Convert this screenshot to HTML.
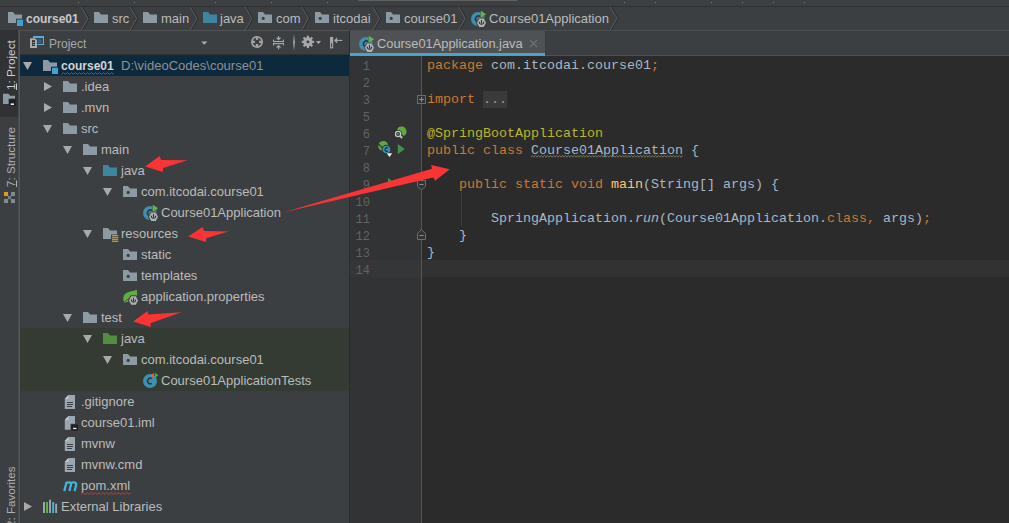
<!DOCTYPE html>
<html><head><meta charset="utf-8">
<style>
*{margin:0;padding:0;box-sizing:border-box}
html,body{width:1009px;height:523px;overflow:hidden}
body{background:#3C3F41;position:relative;font-family:"Liberation Sans",sans-serif;color:#BBBBBB}
.a{position:absolute}
.t{position:absolute;font-size:13px;line-height:21px;height:21px;white-space:pre;color:#BBBBBB}
.bc{position:absolute;top:8px;font-size:13px;line-height:21px;white-space:pre;color:#BBBBBB}
.code{position:absolute;left:427px;font-family:"Liberation Mono",monospace;font-size:13.333px;line-height:17px;height:17px;white-space:pre;color:#A9B7C6}
.ln{position:absolute;left:350px;width:20px;text-align:right;font-family:"Liberation Mono",monospace;font-size:12px;line-height:17px;height:17px;color:#606366}
.k{color:#CC7832}
svg{position:absolute;overflow:visible}
.fold{background:#3A3A3A;color:#9A9A9A;display:inline-block;height:17px;vertical-align:top}
.wavy{}
i{font-style:italic}
</style></head><body>

<!-- top strip + breadcrumb bar -->
<div class="a" style="left:0;top:0;width:1009px;height:6px;background:#3D4042"></div>
<div class="a" style="left:0;top:6px;width:1009px;height:1px;background:#2F3133"></div>
<div class="a" style="left:0;top:7px;width:1009px;height:23px;background:#3C3F41"></div>

<div class="a" style="left:358px;top:0;width:159px;height:1px;background:#5E6062"></div>
<div class="a" style="left:78px;top:2px;width:1px;height:1px;background:#7A7C7E"></div>
<div class="a" style="left:134px;top:2px;width:1px;height:1px;background:#7A7C7E"></div>
<div class="a" style="left:215px;top:2px;width:1px;height:1px;background:#7A7C7E"></div>
<div class="a" style="left:271px;top:2px;width:1px;height:1px;background:#7A7C7E"></div>
<div class="a" style="left:327px;top:2px;width:1px;height:1px;background:#7A7C7E"></div>
<div class="a" style="left:624px;top:2px;width:1px;height:1px;background:#7A7C7E"></div>
<div class="a" style="left:655px;top:2px;width:1px;height:1px;background:#7A7C7E"></div>
<div class="a" style="left:711px;top:2px;width:1px;height:1px;background:#7A7C7E"></div>
<div class="a" style="left:742px;top:2px;width:1px;height:1px;background:#7A7C7E"></div>
<div class="a" style="left:773px;top:2px;width:1px;height:1px;background:#7A7C7E"></div>
<div class="a" style="left:804px;top:2px;width:1px;height:1px;background:#7A7C7E"></div>
<!-- left tool strip -->
<div class="a" style="left:0;top:30px;width:19px;height:87px;background:#303234"></div>
<div class="a" style="left:18px;top:30px;width:1px;height:493px;background:#4A4B4C"></div>
<div class="a" style="left:19px;top:30px;width:1px;height:493px;background:#575757"></div>
<div class="a" style="left:20px;top:31px;width:1px;height:492px;background:#393C3E"></div>

<!-- project panel header -->
<div class="a" style="left:19px;top:30px;width:331px;height:1px;background:#515355"></div>
<div class="a" style="left:20px;top:54px;width:329px;height:1px;background:#2E3032"></div>

<!-- editor -->
<div class="a" style="left:349px;top:30px;width:1px;height:493px;background:#2B2B2B"></div>
<div class="a" style="left:350px;top:30px;width:659px;height:1px;background:#4B4E50"></div>
<div class="a" style="left:350px;top:55px;width:659px;height:1px;background:#4F5254"></div>
<div class="a" style="left:350px;top:31px;width:195px;height:22px;background:#4E5254"></div>
<div class="a" style="left:350px;top:53px;width:195px;height:3px;background:#4BA3C8"></div>
<div class="a" style="left:545px;top:31px;width:1px;height:24px;background:#36393B"></div>
<div class="a" style="left:350px;top:56px;width:659px;height:467px;background:#2B2B2B"></div>
<div class="a" style="left:350px;top:56px;width:71px;height:467px;background:#313335"></div>
<div class="a" style="left:421px;top:56px;width:1px;height:467px;background:#555555"></div>
<div class="a" style="left:350px;top:260px;width:71px;height:17px;background:#343638"></div>
<div class="a" style="left:422px;top:260px;width:587px;height:17px;background:#323232"></div>

<!-- tree selection & test bg -->
<div class="a" style="left:20px;top:55px;width:329px;height:21px;background:#0D293E"></div>
<div class="a" style="left:20px;top:328px;width:329px;height:63px;background:#333B33"></div>

<svg width="0" height="0" style="position:absolute">
<defs>
<symbol id="tdown" viewBox="0 0 9 8"><polygon points="0,0 9,0 4.5,8" fill="#A9A9A9"/></symbol>
<symbol id="tright" viewBox="0 0 8 9"><polygon points="0,0 8,4.5 0,9" fill="#A9A9A9"/></symbol>
<symbol id="i-folder" viewBox="0 0 16 16"><path d="M0 2H5L7 4.5H14V13H0Z" fill="#8C9AA3"/></symbol>
<symbol id="i-srcfolder" viewBox="0 0 16 16"><path d="M0 2H5L7 4.5H14V13H0Z" fill="#3E86A0"/></symbol>
<symbol id="i-testfolder" viewBox="0 0 16 16"><path d="M0 2H5L7 4.5H14V13H0Z" fill="#528E41"/></symbol>
<symbol id="i-pkg" viewBox="0 0 16 16"><path d="M0 2H5L7 4.5H14V13H0Z" fill="#8C9AA3"/><circle cx="5.2" cy="8.4" r="1.6" fill="#3C3F41"/></symbol>
<symbol id="i-mod" viewBox="0 0 16 16"><path d="M0 2H5L7 4.5H14V13H0Z" fill="#8C9AA3"/><rect x="8" y="8.7" width="8" height="8" fill="#0D293E"/><rect x="9" y="9.7" width="6" height="6.3" fill="#3FA2D3"/></symbol>
<symbol id="i-resfolder" viewBox="0 0 16 16"><path d="M0 2H5L7 4.5H14V13H0Z" fill="#8C9AA3"/><rect x="8" y="8.5" width="8" height="8" fill="#3C3F41"/><g fill="#E3A835"><rect x="9" y="9.2" width="6.3" height="1.1"/><rect x="9" y="11.2" width="6.3" height="1.1"/><rect x="9" y="13.2" width="6.3" height="1.1"/><rect x="9" y="15.2" width="6.3" height="1.1"/></g></symbol>
<symbol id="hexold" viewBox="0 0 9 9"><polygon points="2.2,0 6.8,0 9,4.5 6.8,9 2.2,9 0,4.5" fill="#AFB1B3"/><path d="M2.6 3.6A2 2 0 1 0 6.4 3.6" fill="none" stroke="#3C3F41" stroke-width="1.1"/><rect x="4" y="1.6" width="1" height="3.6" fill="#3C3F41"/></symbol>
<symbol id="i-sbclass" viewBox="0 0 16 16"><circle cx="7" cy="8" r="7" fill="#3F8FAE"/><path d="M9.3 5.6A3 3 0 1 0 9.3 10.4" fill="none" stroke="#2D3A40" stroke-width="1.6"/><polygon points="9.8,-0.2 15,3.2 9.8,6.8" fill="#62B543" stroke="currentColor" stroke-width="0.6"/><polygon points="9.8,-0.2 15,3.2 9.8,6.8" fill="#62B543"/><g transform="translate(6,7.6) scale(1,0.93)"><polygon points="2.2,0 6.8,0 9,4.5 6.8,9 2.2,9 0,4.5" fill="currentColor" stroke="currentColor" stroke-width="2" stroke-linejoin="round"/><polygon points="2.2,0 6.8,0 9,4.5 6.8,9 2.2,9 0,4.5" fill="#AFB1B3"/><path d="M2.5 3.4A2.1 2.1 0 1 0 6.5 3.4" fill="none" stroke="#2F3133" stroke-width="1.2"/><rect x="3.95" y="1.5" width="1.1" height="3.8" fill="#2F3133"/></g></symbol>
<symbol id="i-testclass" viewBox="0 0 16 16"><circle cx="7" cy="8" r="7" fill="#3F8FAE"/><path d="M8.8 5.6A2.8 2.8 0 1 0 8.8 10.4" fill="none" stroke="#283840" stroke-width="1.5"/><polygon points="11,-0.2 11,4.8 7.6,2.3" fill="#E9631F"/><polygon points="12,-0.2 15.3,2.3 12,4.8" fill="#55AE39"/></symbol>
<symbol id="i-leaf" viewBox="0 0 16 16"><path d="M13.6 0.8C14.9 5 14.2 9.6 10.2 11.6C7.3 13 4.2 12.6 1.6 13.9C-0.6 10.4 -0.2 6.6 3 4.3C6 2.1 11 2.6 13.6 0.8Z" fill="#5FAE40"/><path d="M1.2 13.6C3 11 6 9.5 9 8.6" stroke="#3C3F41" stroke-width="0.9" fill="none"/><g transform="translate(6,7.2) scale(1,0.96)"><polygon points="2.2,0 6.8,0 9,4.5 6.8,9 2.2,9 0,4.5" fill="currentColor" stroke="currentColor" stroke-width="2" stroke-linejoin="round"/><polygon points="2.2,0 6.8,0 9,4.5 6.8,9 2.2,9 0,4.5" fill="#AFB1B3"/><path d="M2.5 3.4A2.1 2.1 0 1 0 6.5 3.4" fill="none" stroke="#2F3133" stroke-width="1.2"/><rect x="3.95" y="1.5" width="1.1" height="3.8" fill="#2F3133"/></g></symbol>
<symbol id="i-file" viewBox="0 0 16 16"><path d="M5.5 1H12V15H1.8V4.8Z" fill="#9AA7B0"/><path d="M1.8 4.8H5.5V1Z" fill="#C4CBD0"/><g fill="#3C3F41"><rect x="4" y="8" width="6" height="1"/><rect x="4" y="10" width="6" height="1"/><rect x="4" y="12" width="5" height="1"/></g></symbol>
<symbol id="i-iml" viewBox="0 0 16 16"><path d="M5.5 1H12V14.8H1.8V4.8Z" fill="#9AA7B0"/><path d="M1.8 4.8H5.5V1Z" fill="#C4CBD0"/><rect x="7.5" y="8.8" width="8.5" height="7.6" fill="#3C3F41"/><rect x="8.3" y="9.6" width="6.7" height="6" fill="#231F20"/><rect x="10" y="12.8" width="3.5" height="1.3" fill="#E6E6E6"/></symbol>
<symbol id="i-maven" viewBox="0 0 16 16"><path transform="translate(0,0.9)" d="M1.2 12.2L3.4 3.9C5 3.3 7 3.3 8.1 4.2C9.5 3.3 11.8 3.2 12.8 4.2C13.4 4.8 13.3 5.6 13.1 6.4L11.6 12.2M8.1 4.2C8.2 4.8 8.1 5.4 7.9 6.1L6.4 12.2" fill="none" stroke="#40B6E0" stroke-width="2.2" stroke-linejoin="round"/></symbol>
<symbol id="i-libs" viewBox="0 0 16 16"><rect x="0" y="3" width="2" height="11" fill="#9AA7B0"/><rect x="3.1" y="3" width="1.9" height="11" fill="#62B543"/><rect x="6.1" y="0.7" width="1.9" height="13.3" fill="#9AA7B0"/><rect x="9.2" y="3" width="1.9" height="11" fill="#40B6E0"/><rect x="12.2" y="4.7" width="1.9" height="9.3" fill="#9AA7B0"/></symbol>
<symbol id="i-modbc" viewBox="0 0 16 17"><path d="M0 2H5L7 4.5H14V13H0Z" fill="#8C9AA3"/><rect x="8" y="8.7" width="8" height="8" fill="#3C3F41"/><rect x="9" y="9.7" width="6" height="6.3" fill="#3FA2D3"/></symbol>
<symbol id="i-sbclass-tab" viewBox="0 0 16 16"><circle cx="7" cy="8" r="7" fill="#3F8FAE"/><path d="M9.3 5.6A3 3 0 1 0 9.3 10.4" fill="none" stroke="#2D3A40" stroke-width="1.6"/><polygon points="9.8,-0.2 15,3.2 9.8,6.8" fill="#62B543" stroke="currentColor" stroke-width="0.6"/><polygon points="9.8,-0.2 15,3.2 9.8,6.8" fill="#62B543"/><g transform="translate(6,7.6) scale(1,0.93)"><polygon points="2.2,0 6.8,0 9,4.5 6.8,9 2.2,9 0,4.5" fill="currentColor" stroke="currentColor" stroke-width="2" stroke-linejoin="round"/><polygon points="2.2,0 6.8,0 9,4.5 6.8,9 2.2,9 0,4.5" fill="#AFB1B3"/><path d="M2.5 3.4A2.1 2.1 0 1 0 6.5 3.4" fill="none" stroke="#2F3133" stroke-width="1.2"/><rect x="3.95" y="1.5" width="1.1" height="3.8" fill="#2F3133"/></g></symbol>
<symbol id="i-proj" viewBox="0 0 17 14"><rect x="3.5" y="0.5" width="11" height="9" fill="#3C3F41"/><rect x="4" y="1" width="11" height="9" fill="#5EA9D8"/><rect x="5" y="3" width="9" height="6" fill="#2E4A5C"/><rect x="6.5" y="4.5" width="6" height="3.5" fill="#39627A"/><path d="M0 3H6L8.6 5.6V13.5H0Z" fill="#3C3F41"/><path d="M1 3.2H6L8 5.2V13H1Z" fill="#ADADAD"/><rect x="3" y="5.2" width="3" height="5.8" fill="#2F3133"/><rect x="3.7" y="7" width="1.8" height="0.9" fill="#ADADAD"/><rect x="3.7" y="9" width="1.8" height="0.9" fill="#ADADAD"/></symbol>
<symbol id="i-lproj" viewBox="0 0 15 14"><path d="M0 1.8H5.4L7.2 3.8H12V12H0Z" fill="#8C9AA3"/><rect x="5.6" y="6.6" width="7.9" height="7.9" fill="#303234"/><rect x="6.4" y="7.4" width="6.3" height="6.3" fill="#1E1E1E"/><rect x="7.7" y="11.4" width="3.3" height="1.6" fill="#F0F0F0"/></symbol>
<symbol id="i-struct" viewBox="0 0 15 14"><rect x="1" y="1" width="4" height="4" fill="#E09A27"/><g fill="#7F8B91"><rect x="8" y="1" width="4" height="4"/><rect x="1" y="8" width="4" height="4"/><rect x="8" y="8" width="4" height="4"/><path d="M5 5L8 8" stroke="#7F8B91" stroke-width="1.2"/><path d="M8 5L5 8" stroke="#7F8B91" stroke-width="1.2"/></g></symbol>
</defs></svg>

<!-- breadcrumb -->
<svg class="a" style="left:8px;top:10px" width="16" height="17"><use href="#i-modbc"/></svg>
<div class="bc" style="left:26px;top:9px;font-weight:bold;font-size:12px;color:#C8C8C8">course01</div>
<svg class="a" style="left:94px;top:10px" width="16" height="16"><use href="#i-folder"/></svg>
<div class="bc" style="left:112px">src</div>
<svg class="a" style="left:143px;top:10px" width="16" height="16"><use href="#i-folder"/></svg>
<div class="bc" style="left:161px">main</div>
<svg class="a" style="left:203px;top:10px" width="16" height="16"><use href="#i-srcfolder"/></svg>
<div class="bc" style="left:220px">java</div>
<svg class="a" style="left:258px;top:10px" width="16" height="16"><use href="#i-pkg"/></svg>
<div class="bc" style="left:276px">com</div>
<svg class="a" style="left:315px;top:10px" width="16" height="16"><use href="#i-pkg"/></svg>
<div class="bc" style="left:333px">itcodai</div>
<svg class="a" style="left:386px;top:10px" width="16" height="16"><use href="#i-pkg"/></svg>
<div class="bc" style="left:404px">course01</div>
<svg class="a" style="left:471px;top:11px" width="16" height="16" color="#3C3F41"><use href="#i-sbclass"/></svg>
<div class="bc" style="left:489px">Course01Application</div>

<!-- project header -->
<svg class="a" style="left:29px;top:35px" width="17" height="14"><use href="#i-proj"/></svg>
<div class="a" style="left:49px;top:34.5px;font-size:12px;line-height:18px;color:#A5A7A9;white-space:pre">Project</div>
<svg class="a" style="left:200px;top:36px" width="150" height="16">
<polygon points="1.2,5.5 7.4,5.5 4.3,8.8" fill="#A9A9A9"/>
<!-- crosshair -->
<circle cx="57" cy="5.9" r="5.2" fill="none" stroke="#A7A7A7" stroke-width="1.6"/>
<g fill="#A7A7A7"><rect x="55.8" y="1.2" width="2.4" height="2.6"/><rect x="55.8" y="8" width="2.4" height="2.6"/><rect x="52.3" y="4.7" width="2.6" height="2.4"/><rect x="59.1" y="4.7" width="2.6" height="2.4"/></g>
<!-- collapse -->
<g fill="#A7A7A7"><rect x="73" y="5" width="11" height="1.1"/><rect x="73" y="3.6" width="1.1" height="2.5"/><rect x="82.9" y="3.6" width="1.1" height="2.5"/>
<rect x="73" y="7.1" width="11" height="1.1"/><rect x="73" y="7.1" width="1.1" height="2.3"/><rect x="82.9" y="7.1" width="1.1" height="2.3"/>
<rect x="78" y="0" width="1.1" height="2.5"/><polygon points="75.8,1.8 81.3,1.8 78.55,4.4"/>
<polygon points="75.8,11.4 81.3,11.4 78.55,8.8"/><rect x="78" y="11" width="1.1" height="2.4"/></g>
</svg>
<div class="a" style="left:293px;top:34px;width:1.5px;height:17px;background:linear-gradient(#3C3F41,#9A9C9E 50%,#3C3F41)"></div>
<svg class="a" style="left:300px;top:34px" width="50" height="16">
<g transform="translate(7.9,7.9)" fill="#A7A7A7">
<circle r="4.6"/>
<g><rect x="-1.1" y="-6.2" width="2.2" height="12.4"/><rect x="-1.1" y="-6.2" width="2.2" height="12.4" transform="rotate(45)"/><rect x="-1.1" y="-6.2" width="2.2" height="12.4" transform="rotate(90)"/><rect x="-1.1" y="-6.2" width="2.2" height="12.4" transform="rotate(135)"/></g>
<circle r="1.4" fill="#3C3F41"/>
</g>
<polygon points="16,7 21,7 18.5,10.3" fill="#A7A7A7"/>
<rect x="30" y="3" width="3.2" height="11.4" fill="#A7A7A7"/>
<rect x="31.1" y="9.2" width="1" height="4" fill="#3C3F41"/>
<line x1="35" y1="6.4" x2="42.3" y2="6.4" stroke="#A7A7A7" stroke-width="1.1"/>
<polygon points="34,6.4 37.2,3.2 37.2,9.6" fill="#A7A7A7"/>
</svg>

<!-- left strip -->
<div class="a" style="left:-19.5px;top:54px;width:60px;height:12px;transform:rotate(-90deg);font-size:11.8px;line-height:12px;color:#D0D0D0;white-space:pre;text-align:left"><u>1</u>: Project</div>
<svg class="a" style="left:3px;top:92px" width="15" height="14"><use href="#i-lproj"/></svg>
<div class="a" style="left:-19.5px;top:151px;width:60px;height:12px;transform:rotate(-90deg);font-size:11.6px;line-height:12px;color:#AFB1B3;white-space:pre;text-align:right"><u>7</u>: Structure</div>
<svg class="a" style="left:3px;top:191px" width="15" height="14"><use href="#i-struct"/></svg>
<div class="a" style="left:-19.5px;top:491px;width:60px;height:12px;transform:rotate(-90deg);font-size:11.6px;line-height:12px;color:#AFB1B3;white-space:pre;text-align:right">2: Favorites</div>

<svg class="a" style="left:23px;top:62px" width="9" height="8"><use href="#tdown"/></svg>
<svg class="a" style="left:43px;top:58px" width="16" height="16"><use href="#i-mod"/></svg>
<div class="t" style="left:61px;top:56px;font-weight:bold;font-size:12px;color:#D4D4D4">course01</div>
<div class="t" style="left:121px;top:55px;color:#8F9193">D:\videoCodes\course01</div>
<svg class="a" style="left:44px;top:82px" width="8" height="9"><use href="#tright"/></svg>
<svg class="a" style="left:63px;top:79px" width="16" height="16"><use href="#i-folder"/></svg>
<div class="t" style="left:81px;top:76px">.idea</div>
<svg class="a" style="left:44px;top:103px" width="8" height="9"><use href="#tright"/></svg>
<svg class="a" style="left:63px;top:100px" width="16" height="16"><use href="#i-folder"/></svg>
<div class="t" style="left:81px;top:97px">.mvn</div>
<svg class="a" style="left:43px;top:125px" width="9" height="8"><use href="#tdown"/></svg>
<svg class="a" style="left:63px;top:121px" width="16" height="16"><use href="#i-folder"/></svg>
<div class="t" style="left:81px;top:118px">src</div>
<svg class="a" style="left:63px;top:146px" width="9" height="8"><use href="#tdown"/></svg>
<svg class="a" style="left:83px;top:142px" width="16" height="16"><use href="#i-folder"/></svg>
<div class="t" style="left:101px;top:139px">main</div>
<svg class="a" style="left:83px;top:167px" width="9" height="8"><use href="#tdown"/></svg>
<svg class="a" style="left:103px;top:163px" width="16" height="16"><use href="#i-srcfolder"/></svg>
<div class="t" style="left:121px;top:160px">java</div>
<svg class="a" style="left:103px;top:188px" width="9" height="8"><use href="#tdown"/></svg>
<svg class="a" style="left:123px;top:184px" width="16" height="16"><use href="#i-pkg"/></svg>
<div class="t" style="left:141px;top:181px">com.itcodai.course01</div>
<svg class="a" style="left:143px;top:205px" width="16" height="16" color="#3C3F41"><use href="#i-sbclass"/></svg>
<div class="t" style="left:161px;top:202px">Course01Application</div>
<svg class="a" style="left:83px;top:230px" width="9" height="8"><use href="#tdown"/></svg>
<svg class="a" style="left:103px;top:226px" width="16" height="16"><use href="#i-resfolder"/></svg>
<div class="t" style="left:121px;top:223px">resources</div>
<svg class="a" style="left:123px;top:247px" width="16" height="16"><use href="#i-pkg"/></svg>
<div class="t" style="left:141px;top:244px">static</div>
<svg class="a" style="left:123px;top:268px" width="16" height="16"><use href="#i-pkg"/></svg>
<div class="t" style="left:141px;top:265px">templates</div>
<svg class="a" style="left:123px;top:289px" width="16" height="16" color="#3C3F41"><use href="#i-leaf"/></svg>
<div class="t" style="left:141px;top:286px">application.properties</div>
<svg class="a" style="left:63px;top:314px" width="9" height="8"><use href="#tdown"/></svg>
<svg class="a" style="left:83px;top:310px" width="16" height="16"><use href="#i-folder"/></svg>
<div class="t" style="left:101px;top:307px">test</div>
<svg class="a" style="left:83px;top:335px" width="9" height="8"><use href="#tdown"/></svg>
<svg class="a" style="left:103px;top:331px" width="16" height="16"><use href="#i-testfolder"/></svg>
<div class="t" style="left:121px;top:328px">java</div>
<svg class="a" style="left:103px;top:356px" width="9" height="8"><use href="#tdown"/></svg>
<svg class="a" style="left:123px;top:352px" width="16" height="16"><use href="#i-pkg"/></svg>
<div class="t" style="left:141px;top:349px">com.itcodai.course01</div>
<svg class="a" style="left:143px;top:373px" width="16" height="16"><use href="#i-testclass"/></svg>
<div class="t" style="left:161px;top:370px">Course01ApplicationTests</div>
<svg class="a" style="left:63px;top:394px" width="16" height="16"><use href="#i-file"/></svg>
<div class="t" style="left:81px;top:391px">.gitignore</div>
<svg class="a" style="left:63px;top:415px" width="16" height="16"><use href="#i-iml"/></svg>
<div class="t" style="left:81px;top:412px">course01.iml</div>
<svg class="a" style="left:63px;top:436px" width="16" height="16"><use href="#i-file"/></svg>
<div class="t" style="left:81px;top:433px">mvnw</div>
<svg class="a" style="left:63px;top:457px" width="16" height="16"><use href="#i-file"/></svg>
<div class="t" style="left:81px;top:454px">mvnw.cmd</div>
<svg class="a" style="left:63px;top:478px" width="16" height="16"><use href="#i-maven"/></svg>
<div class="t" style="left:81px;top:475px">pom.xml</div>
<svg class="a" style="left:24px;top:502px" width="8" height="9"><use href="#tright"/></svg>
<svg class="a" style="left:43px;top:499px" width="16" height="16"><use href="#i-libs"/></svg>
<div class="t" style="left:61px;top:496px">External Libraries</div>
<!-- tab -->
<svg class="a" style="left:359px;top:36px" width="16" height="16" color="#4E5254"><use href="#i-sbclass-tab"/></svg>
<div class="bc" style="left:377px;top:33px;font-size:12.85px;color:#BBBBBB">Course01Application.java</div>
<svg class="a" style="left:529px;top:39px" width="9" height="9"><path d="M1 1L8 8M8 1L1 8" stroke="#6E7072" stroke-width="1.2"/></svg>

<!-- fold markers, guides -->
<svg class="a" style="left:410px;top:56px" width="60" height="250">
<g fill="#313335" stroke="#6A6C6E" stroke-width="1">
<rect x="7.5" y="39.5" width="8" height="8"/>
<path d="M7.5 124.5H15.5V130.5L11.5 134L7.5 130.5Z"/>
<path d="M7.5 183.5V177.5L11.5 173.5L15.5 177.5V183.5Z"/>
</g>
<g stroke="#8A8C8E" stroke-width="1"><line x1="9" y1="43.5" x2="14" y2="43.5"/><line x1="11.5" y1="41" x2="11.5" y2="46"/><line x1="9.5" y1="128.5" x2="13.5" y2="128.5"/><line x1="9.5" y1="179.5" x2="13.5" y2="179.5"/></g>
<line x1="51.5" y1="136" x2="51.5" y2="170" stroke="#3B3B3B" stroke-width="1"/>
</svg>

<!-- gutter icons -->
<svg class="a" style="left:378px;top:124px" width="32" height="36">
<circle cx="23.5" cy="7.6" r="5.1" fill="#5DAA40"/>
<path d="M18 4.8L26 12.8" stroke="#313335" stroke-width="1.1"/>
<circle cx="20.1" cy="10" r="3.9" fill="#313335"/>
<circle cx="20.1" cy="10" r="2.6" fill="#313335" stroke="#C2C6CA" stroke-width="1.3"/>
<circle cx="20.1" cy="10" r="0.9" fill="#5DAA40"/>
<line x1="22" y1="11.9" x2="24.2" y2="14.1" stroke="#C2C6CA" stroke-width="1.6"/>
<circle cx="5.3" cy="22" r="5.1" fill="#5DAA40"/>
<path d="M0 19.5L8 27.5" stroke="#313335" stroke-width="1.1"/>
<circle cx="8.4" cy="25.5" r="4.7" fill="#313335"/>
<circle cx="8.4" cy="25.5" r="3.8" fill="#3F8FAE"/>
<path d="M9.9 24.1A1.8 1.8 0 1 0 9.9 26.9" fill="none" stroke="#1E2A30" stroke-width="1.1"/>
<polygon points="8.7,29.3 14.2,29.3 11.45,33.1" fill="#313335" stroke="#313335" stroke-width="1"/>
<polygon points="8.7,29.3 14.2,29.3 11.45,33.1" fill="#F0F0F0"/>
<polygon points="19.8,20 26.8,25.1 19.8,30.3" fill="#43904E"/>
<polygon points="10,54 17,59 10,64" fill="#43904E"/>
</svg>

<div class="ln" style="top:59px">1</div>
<div class="code" style="top:57px"><span class="k">package</span> com.itcodai.course01<span class="k">;</span></div>
<div class="ln" style="top:76px">2</div>
<div class="ln" style="top:93px">3</div>
<div class="code" style="top:91px"><span class="k">import</span> <span class="fold">...</span></div>
<div class="ln" style="top:110px">5</div>
<div class="ln" style="top:127px">6</div>
<div class="code" style="top:125px"><span style="color:#BBB529">@SpringBootApplication</span></div>
<div class="ln" style="top:144px">7</div>
<div class="code" style="top:142px"><span class="k">public class</span> <span class="wavy">Course01Application</span> {</div>
<div class="ln" style="top:161px">8</div>
<div class="ln" style="top:178px">9</div>
<div class="code" style="top:176px">    <span class="k">public static void</span> <span style="color:#FFC66D">main</span>(String[] args) {</div>
<div class="ln" style="top:195px">10</div>
<div class="ln" style="top:212px">11</div>
<div class="code" style="top:210px">        SpringApplication.<i>run</i>(Course01Application.<span class="k">class</span><span class="k">,</span> args)<span class="k">;</span></div>
<div class="ln" style="top:229px">12</div>
<div class="code" style="top:227px">    }</div>
<div class="ln" style="top:246px">13</div>
<div class="code" style="top:244px">}</div>
<div class="ln" style="top:263px">14</div>
<svg class="a" style="left:0;top:0" width="1009" height="523">
<polyline points="61.5,74.5 63.5,72.5 65.5,74.5 67.5,72.5 69.5,74.5 71.5,72.5 73.5,74.5 75.5,72.5 77.5,74.5 79.5,72.5 81.5,74.5 83.5,72.5 85.5,74.5 87.5,72.5 89.5,74.5 91.5,72.5 93.5,74.5 95.5,72.5 97.5,74.5 99.5,72.5 101.5,74.5 103.5,72.5 105.5,74.5 107.5,72.5 109.5,74.5 111.5,72.5 113.5,74.5" fill="none" stroke="#BC3F3C" stroke-width="1"/>
<polyline points="81.0,494.5 83.0,492.5 85.0,494.5 87.0,492.5 89.0,494.5 91.0,492.5 93.0,494.5 95.0,492.5 97.0,494.5 99.0,492.5 101.0,494.5 103.0,492.5 105.0,494.5 107.0,492.5 109.0,494.5 111.0,492.5 113.0,494.5 115.0,492.5 117.0,494.5 119.0,492.5 121.0,494.5 123.0,492.5 125.0,494.5 127.0,492.5 129.0,494.5 131.0,492.5" fill="none" stroke="#BC3F3C" stroke-width="1"/>
<polyline points="531.0,157.3 532.5,155.3 534.0,157.3 535.5,155.3 537.0,157.3 538.5,155.3 540.0,157.3 541.5,155.3 543.0,157.3 544.5,155.3 546.0,157.3 547.5,155.3 549.0,157.3 550.5,155.3 552.0,157.3 553.5,155.3 555.0,157.3 556.5,155.3 558.0,157.3 559.5,155.3 561.0,157.3 562.5,155.3 564.0,157.3 565.5,155.3 567.0,157.3 568.5,155.3 570.0,157.3 571.5,155.3 573.0,157.3 574.5,155.3 576.0,157.3 577.5,155.3 579.0,157.3 580.5,155.3 582.0,157.3 583.5,155.3 585.0,157.3 586.5,155.3 588.0,157.3 589.5,155.3 591.0,157.3 592.5,155.3 594.0,157.3 595.5,155.3 597.0,157.3 598.5,155.3 600.0,157.3 601.5,155.3 603.0,157.3 604.5,155.3 606.0,157.3 607.5,155.3 609.0,157.3 610.5,155.3 612.0,157.3 613.5,155.3 615.0,157.3 616.5,155.3 618.0,157.3 619.5,155.3 621.0,157.3 622.5,155.3 624.0,157.3 625.5,155.3 627.0,157.3 628.5,155.3 630.0,157.3 631.5,155.3 633.0,157.3 634.5,155.3 636.0,157.3 637.5,155.3 639.0,157.3 640.5,155.3 642.0,157.3 643.5,155.3 645.0,157.3 646.5,155.3 648.0,157.3 649.5,155.3 651.0,157.3 652.5,155.3 654.0,157.3 655.5,155.3 657.0,157.3 658.5,155.3 660.0,157.3 661.5,155.3 663.0,157.3 664.5,155.3 666.0,157.3 667.5,155.3 669.0,157.3 670.5,155.3 672.0,157.3 673.5,155.3 675.0,157.3 676.5,155.3 678.0,157.3 679.5,155.3 681.0,157.3 682.5,155.3" fill="none" stroke="#6E6E55" stroke-width="1"/>
<polyline points="82.3,7 89.0,18.5 82.3,30" fill="none" stroke="#2C2E30" stroke-width="1.4"/>
<polyline points="81.3,7 88.0,18.5 81.3,30" fill="none" stroke="#5A5C5E" stroke-width="1"/>
<polyline points="131.1,7 137.8,18.5 131.1,30" fill="none" stroke="#2C2E30" stroke-width="1.4"/>
<polyline points="130.1,7 136.8,18.5 130.1,30" fill="none" stroke="#5A5C5E" stroke-width="1"/>
<polyline points="191.2,7 197.9,18.5 191.2,30" fill="none" stroke="#2C2E30" stroke-width="1.4"/>
<polyline points="190.2,7 196.9,18.5 190.2,30" fill="none" stroke="#5A5C5E" stroke-width="1"/>
<polyline points="246.3,7 253.0,18.5 246.3,30" fill="none" stroke="#2C2E30" stroke-width="1.4"/>
<polyline points="245.3,7 252.0,18.5 245.3,30" fill="none" stroke="#5A5C5E" stroke-width="1"/>
<polyline points="302.8,7 309.5,18.5 302.8,30" fill="none" stroke="#2C2E30" stroke-width="1.4"/>
<polyline points="301.8,7 308.5,18.5 301.8,30" fill="none" stroke="#5A5C5E" stroke-width="1"/>
<polyline points="373.9,7 380.6,18.5 373.9,30" fill="none" stroke="#2C2E30" stroke-width="1.4"/>
<polyline points="372.9,7 379.6,18.5 372.9,30" fill="none" stroke="#5A5C5E" stroke-width="1"/>
<polyline points="459.6,7 466.3,18.5 459.6,30" fill="none" stroke="#2C2E30" stroke-width="1.4"/>
<polyline points="458.6,7 465.3,18.5 458.6,30" fill="none" stroke="#5A5C5E" stroke-width="1"/>
<polyline points="611.3,7 618.0,18.5 611.3,30" fill="none" stroke="#2C2E30" stroke-width="1.4"/>
<polyline points="610.3,7 617.0,18.5 610.3,30" fill="none" stroke="#5A5C5E" stroke-width="1"/>
</svg>

<svg class="a" style="left:0;top:0" width="1009" height="523">
<g fill="#FA3434">
<polygon points="145.2,166.6 159.6,156.0 161.1,159.9 187.4,160.2 163.2,168.0 162.9,172.1"/>
<polygon points="188.3,236.6 202.6,227.1 204.1,231.0 228.5,231.4 206.2,238.2 205.9,242.1"/>
<polygon points="133.2,321.5 147.5,311.0 148.2,314.6 181.5,312.3 150.3,323.2 151.0,326.9"/>
<polygon points="282.9,212.4 432,168.7 431.1,165.0 449.8,169.2 435.1,180.8 433.4,177.4"/>
</g>
</svg>

</body></html>
